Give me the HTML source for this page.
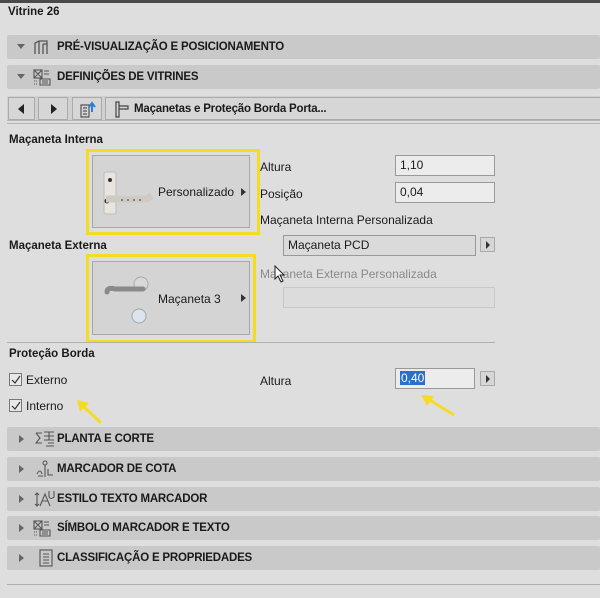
<!DOCTYPE html>
<html><head><meta charset="utf-8"><style>
*{margin:0;padding:0;box-sizing:border-box}
body{width:600px;height:598px;background:#dedede;font-family:"Liberation Sans",sans-serif;font-size:12px;color:#1a1a1a;position:relative;overflow:hidden}
.a{position:absolute}
.hdr{position:absolute;left:7px;width:593px;height:24px;background:#c9c9c9;border-radius:2px}
.hdr .t{position:absolute;left:50px;top:6px;font-weight:bold;font-size:11.5px;letter-spacing:-0.2px}
.tri{position:absolute;left:10px;top:9px;width:0;height:0}
.down{border-left:4px solid transparent;border-right:4px solid transparent;border-top:5px solid #666}
.right{border-top:4px solid transparent;border-bottom:4px solid transparent;border-left:5px solid #666;left:12px;top:8px}
.b{font-weight:bold}
.inp{position:absolute;background:#ececec;border:1px solid #999;height:21px;padding:2px 4px;font-size:12px}
.arr{position:absolute;width:15px;height:15px;background:#d6d6d6;border:1px solid #aaa}
.arr:after{content:"";position:absolute;left:5px;top:3px;border-top:4px solid transparent;border-bottom:4px solid transparent;border-left:4px solid #333}
.yb{position:absolute;border:3px solid #f5dc24}
.gb{position:absolute;background:#d4d4d4;border:1px solid #a8a8a8}
.cb{position:absolute;width:13px;height:13px;border:1px solid #777;background:#e8e8e8}
</style></head><body>
<div class="a" style="left:0;top:0;width:600px;height:3px;background:#4a4a4a"></div>
<div class="a b" style="left:8px;top:6px;font-size:11.5px">Vitrine 26</div>

<div class="hdr" style="top:35px"><div class="tri down"></div>
<svg class="a" style="left:26px;top:4px" width="16" height="16" viewBox="0 0 16 16" fill="none" stroke="#555" stroke-width="1.3"><path d="M2 15V4l4-2h8v13M6 2v13M10 5v10M14 5h-4"/></svg>
<div class="t">PRÉ-VISUALIZAÇÃO E POSICIONAMENTO</div></div>
<div class="hdr" style="top:65px"><div class="tri down"></div>
<svg class="a" style="left:26px;top:3px" width="18" height="18" viewBox="0 0 18 18" fill="none" stroke="#555" stroke-width="1.1"><rect x="1" y="2" width="8" height="8"/><path d="M1 2l8 8M9 2l-8 8M11 3h5M11 6h5M7 11h10v6H7zM9 13h6M9 15h6M1 13h1M3 13h1M1 16h1M3 16h1"/></svg>
<div class="t">DEFINIÇÕES DE VITRINES</div></div>

<div class="a" style="left:7px;top:96px;width:593px;height:25px;background:#d0d0d0;border-bottom:1px solid #b8b8b8"></div>
<div class="a" style="left:8px;top:97px;width:27px;height:23px;border:1px solid #aaa;background:#d6d6d6"><div class="a" style="left:9px;top:6px;border-top:5px solid transparent;border-bottom:5px solid transparent;border-right:6px solid #222"></div></div>
<div class="a" style="left:38px;top:97px;width:30px;height:23px;border:1px solid #aaa;background:#d6d6d6"><div class="a" style="left:12px;top:6px;border-top:5px solid transparent;border-bottom:5px solid transparent;border-left:6px solid #222"></div></div>
<div class="a" style="left:72px;top:97px;width:30px;height:23px;border:1px solid #aaa;background:#d6d6d6">
<svg class="a" style="left:6px;top:3px" width="18" height="17" viewBox="0 0 18 17" fill="none" stroke="#555" stroke-width="1.2"><path d="M2 4h8v12H2zM4 7h4M4 10h4M4 13h4"/><path d="M13 11V3M10 6l3-4 3 4" stroke="#2a7fd8" stroke-width="2"/></svg></div>
<div class="a" style="left:105px;top:97px;width:495px;height:23px;border:1px solid #aaa;border-right:none;background:#d6d6d6">
<svg class="a" style="left:6px;top:2px" width="18" height="18" viewBox="0 0 18 18" fill="none" stroke="#444" stroke-width="1.2"><path d="M4 2h3v15H4zM7 6h9v3H7"/></svg>
<div class="a b" style="left:28px;top:5px;font-size:11.5px;letter-spacing:-0.2px">Maçanetas e Proteção Borda Porta...</div></div>
<div class="a" style="left:7px;top:123px;width:593px;height:1px;background:#b5b5b5"></div>

<div class="a b" style="left:9px;top:134px;font-size:11.5px">Maçaneta Interna</div>
<div class="yb" style="left:86px;top:149px;width:174px;height:86px"></div>
<div class="gb" style="left:92px;top:155px;width:158px;height:73px">
<svg class="a" style="left:7px;top:10px" width="55" height="50" viewBox="0 0 55 50"><rect x="4" y="6" width="12" height="42" rx="2" fill="#e8e4de" stroke="#bbb"/><circle cx="10" cy="14" r="2" fill="#333"/><circle cx="7" cy="35" r="2.5" fill="#333"/><path d="M6 33h40l6-3" stroke="#cfcac3" stroke-width="7" fill="none"/><circle cx="22" cy="34" r="1" fill="#666"/><circle cx="28" cy="34" r="1" fill="#666"/><circle cx="34" cy="34" r="1" fill="#666"/><circle cx="40" cy="34" r="1" fill="#666"/></svg>
<div class="a" style="left:65px;top:29px;font-size:12px">Personalizado</div>
<div class="a" style="left:148px;top:32px;border-top:4px solid transparent;border-bottom:4px solid transparent;border-left:5px solid #333"></div></div>

<div class="a b" style="left:9px;top:240px;font-size:11.5px">Maçaneta Externa</div>
<div class="yb" style="left:86px;top:254px;width:170px;height:89px"></div>
<div class="gb" style="left:92px;top:261px;width:158px;height:74px">
<svg class="a" style="left:8px;top:10px" width="55" height="55" viewBox="0 0 55 55"><circle cx="40" cy="12" r="7" fill="#d8d8d8" stroke="#aaa"/><path d="M6 20q0 -5 8 -3h28" stroke="#8a8a8a" stroke-width="5" fill="none" stroke-linecap="round"/><circle cx="38" cy="44" r="7" fill="#dde4ee" stroke="#9aa"/></svg>
<div class="a" style="left:65px;top:30px;font-size:12px">Maçaneta 3</div>
<div class="a" style="left:148px;top:32px;border-top:4px solid transparent;border-bottom:4px solid transparent;border-left:5px solid #333"></div></div>

<div class="a" style="left:260px;top:160px">Altura</div>
<div class="inp" style="left:395px;top:155px;width:100px">1,10</div>
<div class="a" style="left:260px;top:187px">Posição</div>
<div class="inp" style="left:395px;top:182px;width:100px">0,04</div>
<div class="a" style="left:260px;top:213px">Maçaneta Interna Personalizada</div>
<div class="inp" style="left:283px;top:235px;width:193px;background:#dadada">Maçaneta PCD</div>
<div class="arr" style="left:480px;top:237px"></div>
<div class="a" style="left:260px;top:267px;color:#8a8a8a">Maçaneta Externa Personalizada</div>
<svg class="a" style="left:274px;top:265px" width="12" height="18" viewBox="0 0 12 18"><path d="M1 1v13l3-3 3 6 2-1-3-6h4z" fill="#fff" stroke="#222"/></svg>
<div class="a" style="left:283px;top:287px;width:212px;height:21px;border:1px solid #c8c8c8;background:#dcdcdc"></div>

<div class="a" style="left:7px;top:342px;width:488px;height:1px;background:#b0b0b0"></div>
<div class="a b" style="left:9px;top:348px;font-size:11.5px">Proteção Borda</div>
<div class="cb" style="left:9px;top:373px"></div>
<svg class="a" style="left:10px;top:374px" width="12" height="12" viewBox="0 0 12 12"><path d="M2 6l3 3 5-7" stroke="#333" fill="none" stroke-width="1.2"/></svg>
<div class="a" style="left:26px;top:373px">Externo</div>
<div class="cb" style="left:9px;top:399px"></div>
<svg class="a" style="left:10px;top:400px" width="12" height="12" viewBox="0 0 12 12"><path d="M2 6l3 3 5-7" stroke="#333" fill="none" stroke-width="1.2"/></svg>
<div class="a" style="left:26px;top:399px">Interno</div>
<svg class="a" style="left:75px;top:398px" width="30" height="28" viewBox="0 0 30 28"><path d="M26 25L6 6" stroke="#f5dc24" stroke-width="3"/><path d="M2 2l12 3-9 9z" fill="#f5dc24"/></svg>

<div class="a" style="left:260px;top:374px">Altura</div>
<div class="inp" style="left:395px;top:368px;width:80px"><span style="background:#2a6fc9;color:#fff;padding:0 1px">0,40</span></div>
<div class="arr" style="left:480px;top:371px"></div>
<svg class="a" style="left:418px;top:393px" width="40" height="26" viewBox="0 0 40 26"><path d="M36 22L10 6" stroke="#f5dc24" stroke-width="3"/><path d="M3 2l13 1-7 10z" fill="#f5dc24"/></svg>

<div class="hdr" style="top:427px"><div class="tri right"></div>
<svg class="a" style="left:28px;top:4px" width="20" height="16" viewBox="0 0 20 16" fill="none" stroke="#555" stroke-width="1.1"><path d="M1 2h6M1 2l4 5-4 5h6M9 1h10M14 1v8M9 5h10M9 9h10M13 12h6M11 15h8"/></svg>
<div class="t">PLANTA E CORTE</div></div>
<div class="hdr" style="top:457px"><div class="tri right"></div>
<svg class="a" style="left:28px;top:3px" width="20" height="18" viewBox="0 0 20 18" fill="none" stroke="#555" stroke-width="1.1"><circle cx="10" cy="3" r="2"/><path d="M10 5v12M2 14q3-6 5 0M13 9v6h5M3 16h5"/></svg>
<div class="t">MARCADOR DE COTA</div></div>
<div class="hdr" style="top:487px"><div class="tri right"></div>
<svg class="a" style="left:27px;top:3px" width="22" height="18" viewBox="0 0 22 18" fill="none" stroke="#555" stroke-width="1.1"><path d="M3 3v13M1 5l2-2 2 2M1 14l2 2 2-2M6 16l5-12 5 12M8 11h6M15 1v6q2 3 5 0V1"/></svg>
<div class="t">ESTILO TEXTO MARCADOR</div></div>
<div class="hdr" style="top:516px"><div class="tri right"></div>
<svg class="a" style="left:26px;top:3px" width="18" height="18" viewBox="0 0 18 18" fill="none" stroke="#555" stroke-width="1.1"><rect x="1" y="2" width="8" height="8"/><path d="M1 2l8 8M9 2l-8 8M11 3h5M11 6h5M7 11h10v6H7zM9 13h6M9 15h6M1 13h1M3 13h1M1 16h1M3 16h1"/></svg>
<div class="t">SÍMBOLO MARCADOR E TEXTO</div></div>
<div class="hdr" style="top:546px"><div class="tri right"></div>
<svg class="a" style="left:32px;top:3px" width="14" height="18" viewBox="0 0 14 18" fill="none" stroke="#555" stroke-width="1.1"><rect x="1" y="1" width="12" height="16"/><path d="M4 5h6M4 8h6M4 11h6M4 14h6"/></svg>
<div class="t">CLASSIFICAÇÃO E PROPRIEDADES</div></div>
<div class="a" style="left:7px;top:584px;width:593px;height:1px;background:#b0b0b0"></div>
</body></html>
